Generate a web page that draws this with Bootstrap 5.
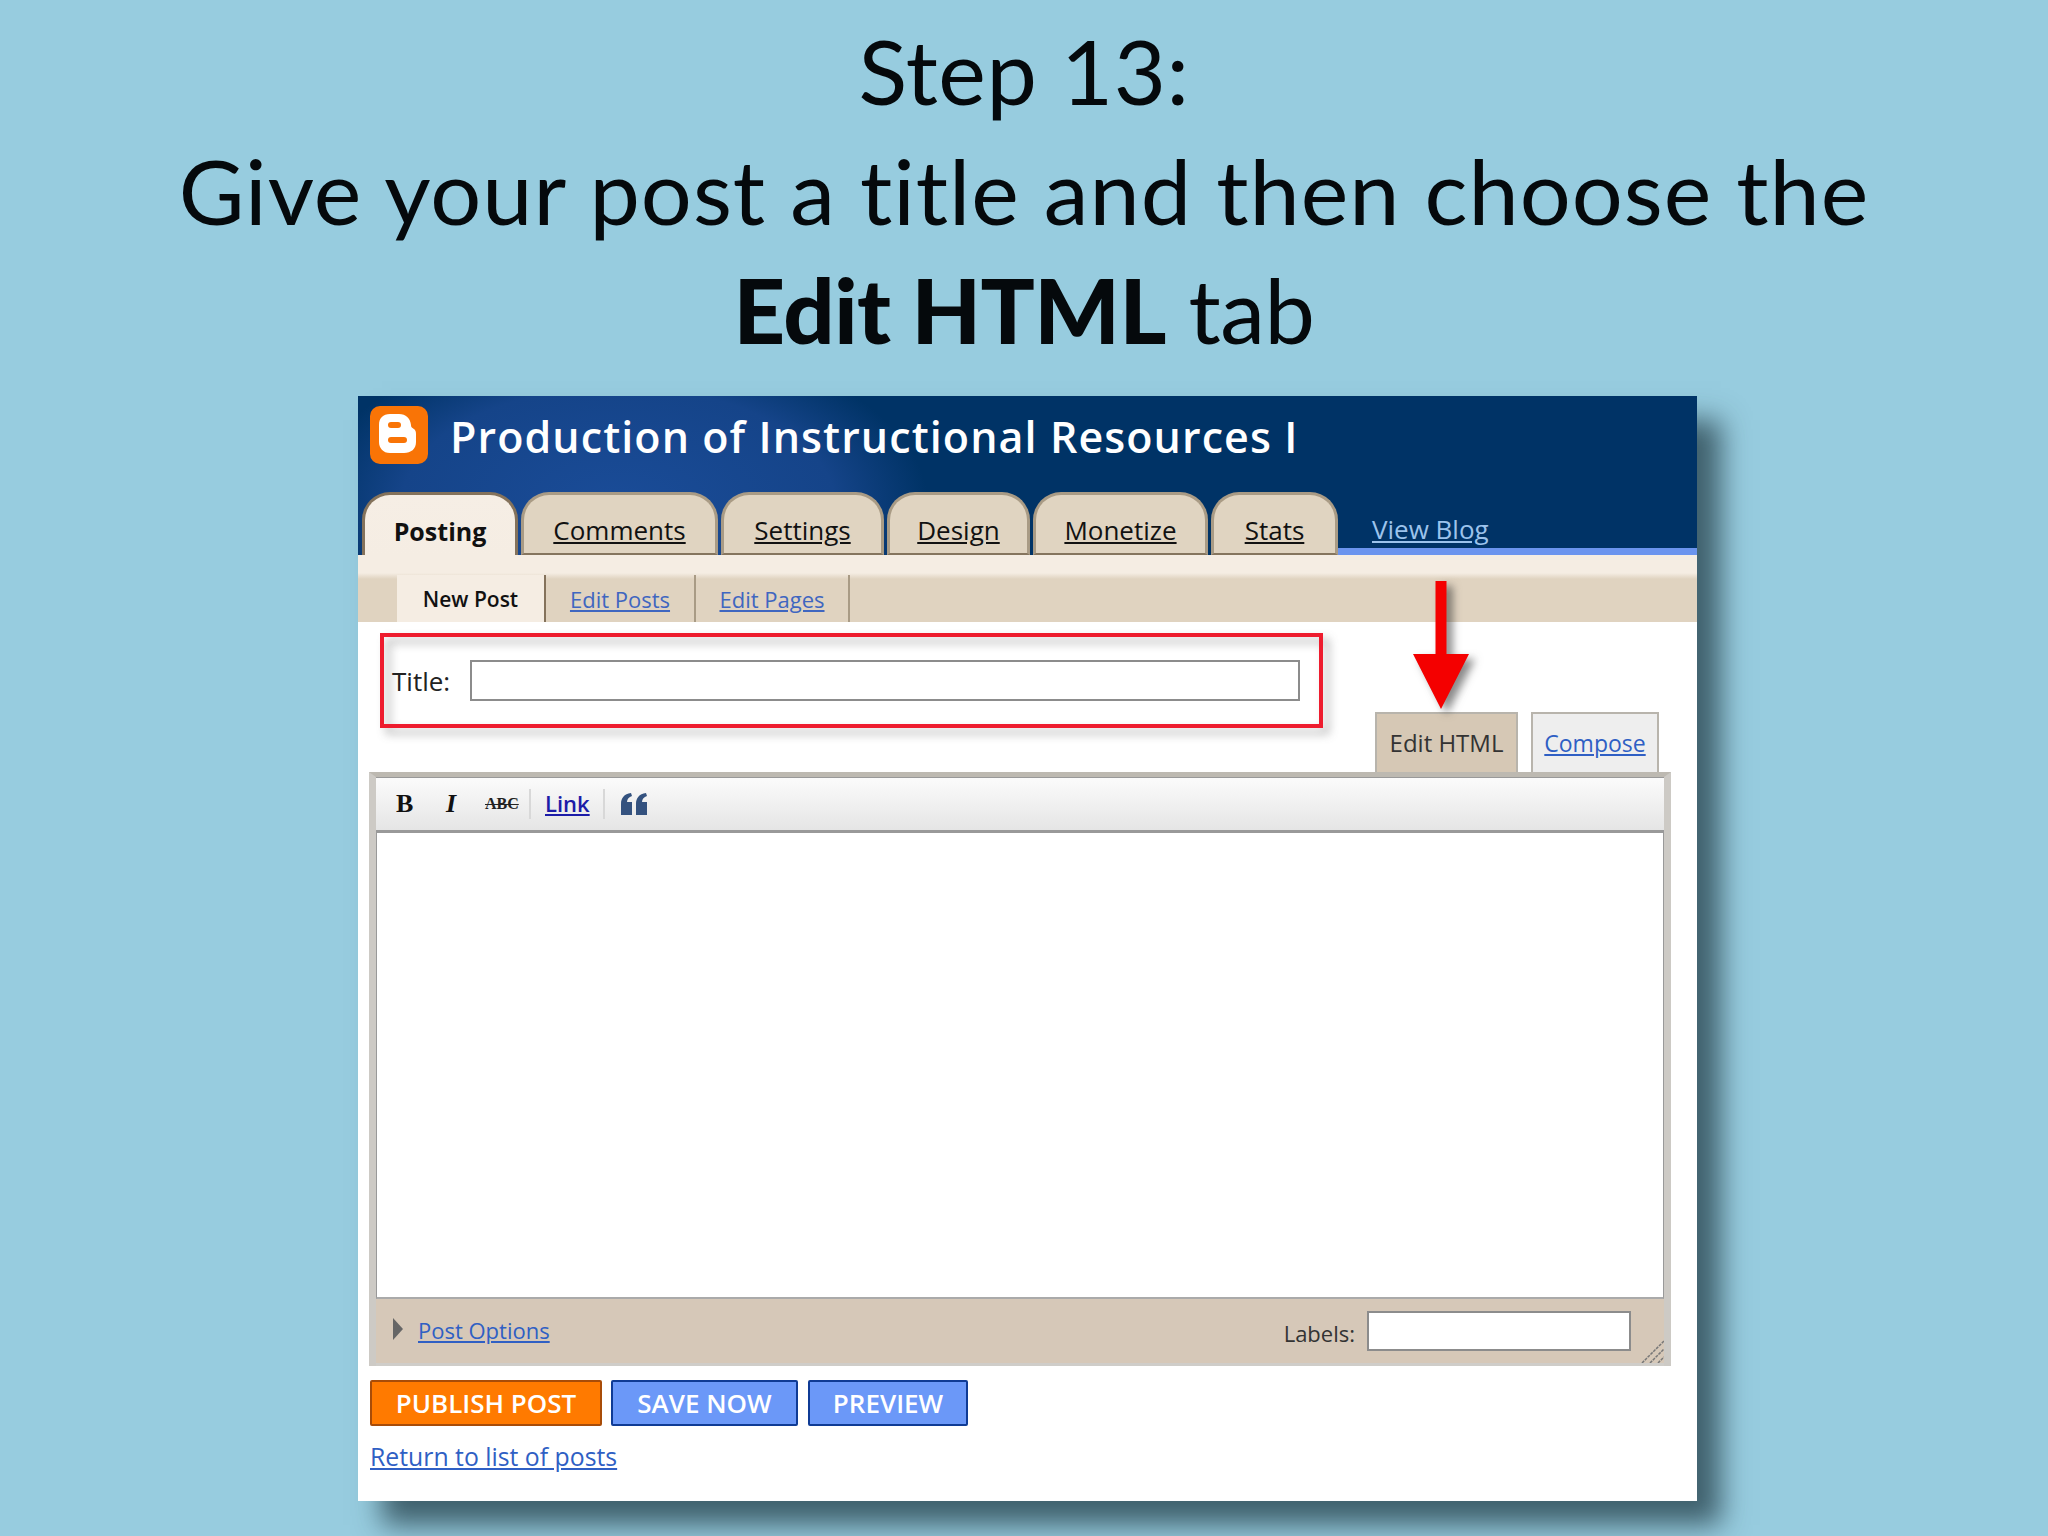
<!DOCTYPE html>
<html lang="en">
<head>
  <meta charset="UTF-8">
  <title>Step 13</title>
  <link href="https://cdn.jsdelivr.net/npm/bootstrap@5.3.3/dist/css/bootstrap.min.css" rel="stylesheet">
  <style>
    body { background: #97ccdf; min-height: 1536px; overflow: hidden; font-family: "Open Sans", sans-serif; }
    a { color: #2f5fc4; }
    .step-title { font-family: Lato, sans-serif; font-size: 90px; line-height: 119.5px; font-weight: 400; color: #05090c; text-align: center; margin: 0; padding-top: 11px; font-variant-ligatures: none; letter-spacing: .55px; }
    .step-title b { font-weight: 900; }
    .line-wide { letter-spacing: 1px; }
    .line-tight { letter-spacing: -.5px; }
    .blog-window { width: 1339px; height: 1105px; margin: 26px 0 0 358px; background: #fff; box-shadow: 24px 24px 26px rgba(30, 55, 65, .72); }
    .blog-head { height: 159px; background: radial-gradient(ellipse 310px 170px at 260px 110px, #1a4c98 0, #154489 70%, #003366 100%), #003366; }
    .logo-row { padding: 10px 12px 0; gap: 22px; height: 96px; }
    .logo-row svg { width: 58px; height: 58px; }
    .blog-name { color: #fff; font-family: "Open Sans", sans-serif; font-weight: 600; font-size: 43px; line-height: 62px; letter-spacing: 1.08px; white-space: nowrap; }
    .tab-bar { height: 63px; padding-left: 4px; gap: 3px; }
    .tab-item { display: flex; justify-content: center; align-items: center; font-size: 26px; height: 63px; padding-top: 14px; color: #111; text-decoration: underline; background: #e0d4c1; border: 3px solid #a99b85; border-bottom: 2px solid #85755e; border-radius: 28px 28px 0 0; }
    .tab-on { background: linear-gradient(#f6eee5, #f5ede3); border-color: #84725b; border-bottom: 0; font-size: 25px; font-weight: 700; text-decoration: none; color: #111; }
    .view-blog { flex-grow: 1; height: 63px; margin-left: -3px; display: flex; align-items: center; padding: 20px 0 0 34px; border-bottom: 7px solid #6b94ee; }
    .view-blog a { color: #9cc3ec; font-size: 26px; }
    .sub-band { height: 67px; padding-left: 39px; background: linear-gradient(#f5ede3 0, #f5ede3 18px, #e0d3c0 24px, #e0d3c0 100%); }
    .sub-item { height: 47px; padding-top: 3px; display: flex; align-items: center; justify-content: center; font-size: 22px; border-right: 2px solid #a99b85; color: #3f66c0; text-decoration: underline; }
    .sub-on { background: #f5ede3; color: #111; font-size: 21px; font-weight: 600; text-decoration: none; border-right-color: #84725b; }
    .blog-main { position: relative; height: 879px; padding: 38px 0 0 11px; }
    .title-row { height: 41px; padding-left: 23px; }
    .title-row label { width: 78px; font-size: 26px; color: #222; padding-top: 2px; }
    .plain-input { width: 830px; height: 41px; padding: 0; border: 2px solid #8c8c8c; border-radius: 0; background: #fff; }
    .mode-row { margin-top: 11px; padding-right: 38px; gap: 13px; height: 60px; }
    .mode-item { display: flex; align-items: center; justify-content: center; font-size: 24px; padding-top: 1px; border: 2px solid #b8b4ac; border-bottom: 0; height: 60px; }
    .mode-on { width: 143px; background: #d6c8b5; color: #333; }
    .mode-off { width: 128px; font-size: 23px; background: #eeeeee; color: #2f5fc4; text-decoration: underline; }
    .editor-box { width: 1302px; border: 7px solid #cdcac5; border-top: 5px solid #bdb9b1; border-bottom: 0; background: #d6c8b8; }
    .edit-tools { height: 56px; padding-left: 20px; background: linear-gradient(#fbfbfb, #e5e5e5); border: solid #999; border-width: 1px 0 3px 0; }
    .tool-bold { font: 700 26px "Liberation Serif", serif; width: 50px; color: #111; }
    .tool-ital { font: italic 700 26px "Liberation Serif", serif; width: 39px; color: #111; }
    .tool-abc { font: 700 16px "Liberation Serif", serif; text-decoration: line-through; width: 44px; color: #222; }
    .tool-sep { width: 2px; height: 30px; background: #d8d8d8; }
    .tool-link { font-size: 22px; font-weight: 600; color: #1c1ca8; margin: 0 13px 0 14px; }
    .tool-quote { width: 26px; height: 22px; margin-left: 16px; }
    .edit-area { height: 466px; background: #fff; border-bottom: 2px solid #aaa; border-left: 1px solid #999; border-right: 1px solid #999; }
    .edit-foot { position: relative; height: 67px; padding: 12px 33px 0 17px; background: #d6c8b8; border-bottom: 3px solid #cfcdc9; }
    .edit-foot a { font-size: 22px; margin-top: 3px; }
    .foot-arrow { width: 0; height: 0; border: 11px solid transparent; border-left: 10px solid #666; border-right: 0; margin-right: 15px; margin-top: 7px; }
    .foot-label { font-size: 22px; color: #333; margin: 6px 12px 0 auto; }
    .foot-input { width: 264px; height: 40px; }
    .size-grip { position: absolute; right: 0; bottom: 0; width: 24px; height: 24px; }
    .action-row { margin: 14px 0 0 1px; gap: 9px; }
    .act-btn { height: 46px; padding: 0; font-size: 26px; font-weight: 600; color: #fff; border-radius: 2px; line-height: 1; }
    .act-orange { width: 232px; background: #ff7a00; border: 2px solid #a84c08; }
    .act-blue { background: #6b98f8; border: 2px solid #0f3b95; }
    .act-save { width: 187px; }
    .act-prev { width: 160px; margin-left: 1px; }
    .act-btn:hover { color: #fff; }
    .back-link { margin: 12px 0 0 1px; font-size: 24.800px; display: inline-block; }
    .red-box { position: absolute; left: 22px; top: 11px; width: 943px; height: 95px; border: 4px solid #ee1c2e; filter: drop-shadow(6px 6px 5px rgba(60, 60, 60, .4)); pointer-events: none; }
    .red-arrow { position: absolute; left: 1055px; top: -41px; width: 56px; height: 128px; filter: drop-shadow(6px 5px 4px rgba(40, 40, 40, .55)); }
  </style>
</head>
<body>
  <h1 class="step-title">Step 13:<br><span class="line-wide">Give your post a title and then choose the</span><br><span class="line-tight"><b>Edit HTML</b> tab</span></h1>

  <div class="blog-window">
    <div class="blog-head d-flex flex-column">
      <div class="logo-row d-flex align-items-start">
        <svg viewBox="0 0 58 58">
          <rect width="58" height="58" rx="10" fill="#f97406"/>
          <path fill-rule="evenodd" fill="#fff" d="M20 8h9c7 0 11 4 12 11 0 3 2 3 3 4 1 1 2 2 2 5v8c0 7-5 11-12 11H20c-7 0-11-5-11-11V19c0-7 4-11 11-11zM21 16a3 3 0 0 0 0 6h7a3 3 0 0 0 0-6zM21 31a3 3 0 0 0 0 6h13a3 3 0 0 0 0-6z"/>
        </svg>
        <div class="blog-name">Production of Instructional Resources I</div>
      </div>
      <div class="tab-bar d-flex">
        <a class="tab-item tab-on" style="width:156px">Posting</a>
        <a class="tab-item" style="width:197px">Comments</a>
        <a class="tab-item" style="width:163px">Settings</a>
        <a class="tab-item" style="width:143px">Design</a>
        <a class="tab-item" style="width:175px">Monetize</a>
        <a class="tab-item" style="width:127px">Stats</a>
        <div class="view-blog"><a href="#">View Blog</a></div>
      </div>
    </div>

    <div class="sub-band d-flex align-items-end">
      <a class="sub-item sub-on" style="width:149px">New Post</a>
      <a class="sub-item" style="width:150px">Edit Posts</a>
      <a class="sub-item" style="width:154px">Edit Pages</a>
    </div>

    <div class="blog-main">
      <div class="title-row d-flex align-items-center">
        <label>Title:</label>
        <input class="form-control plain-input" type="text">
      </div>

      <div class="mode-row d-flex justify-content-end">
        <div class="mode-item mode-on">Edit HTML</div>
        <a class="mode-item mode-off">Compose</a>
      </div>

      <div class="editor-box">
        <div class="edit-tools d-flex align-items-center">
          <span class="tool-bold">B</span>
          <span class="tool-ital">I</span>
          <span class="tool-abc">ABC</span>
          <span class="tool-sep"></span>
          <a class="tool-link" href="#">Link</a>
          <span class="tool-sep"></span>
          <svg class="tool-quote" viewBox="0 0 26 22"><path fill="#34527f" d="M0 22V11C0 5 3 1 10 0l1 3C8 4 6 6 6 9h5v13zM15 22V11c0-6 3-10 10-11l1 3c-3 1-5 3-5 6h5v13z"/></svg>
        </div>
        <div class="edit-area"></div>
        <div class="edit-foot d-flex align-items-start">
          <span class="foot-arrow"></span>
          <a href="#">Post Options</a>
          <span class="foot-label">Labels:</span>
          <input class="form-control plain-input foot-input" type="text">
          <svg class="size-grip" viewBox="0 0 24 24"><path stroke="#777" stroke-width="1.5" fill="none" stroke-dasharray="3 1" d="M2 24 24 2M10 24 24 10M18 24l6-6"/></svg>
        </div>
      </div>

      <div class="action-row d-flex">
        <button class="btn act-btn act-orange">PUBLISH POST</button>
        <button class="btn act-btn act-blue act-save">SAVE NOW</button>
        <button class="btn act-btn act-blue act-prev">PREVIEW</button>
      </div>
      <a class="back-link" href="#">Return to list of posts</a>

      <div class="red-box"></div>
      <svg class="red-arrow" viewBox="0 0 56 128"><path fill="#f40000" d="M22.500 0h11v73h22.500L28 128 0 73h22.500z"/></svg>
    </div>
  </div>

  <script src="https://cdn.jsdelivr.net/npm/bootstrap@5.3.3/dist/js/bootstrap.bundle.min.js"></script>
</body>
</html>
